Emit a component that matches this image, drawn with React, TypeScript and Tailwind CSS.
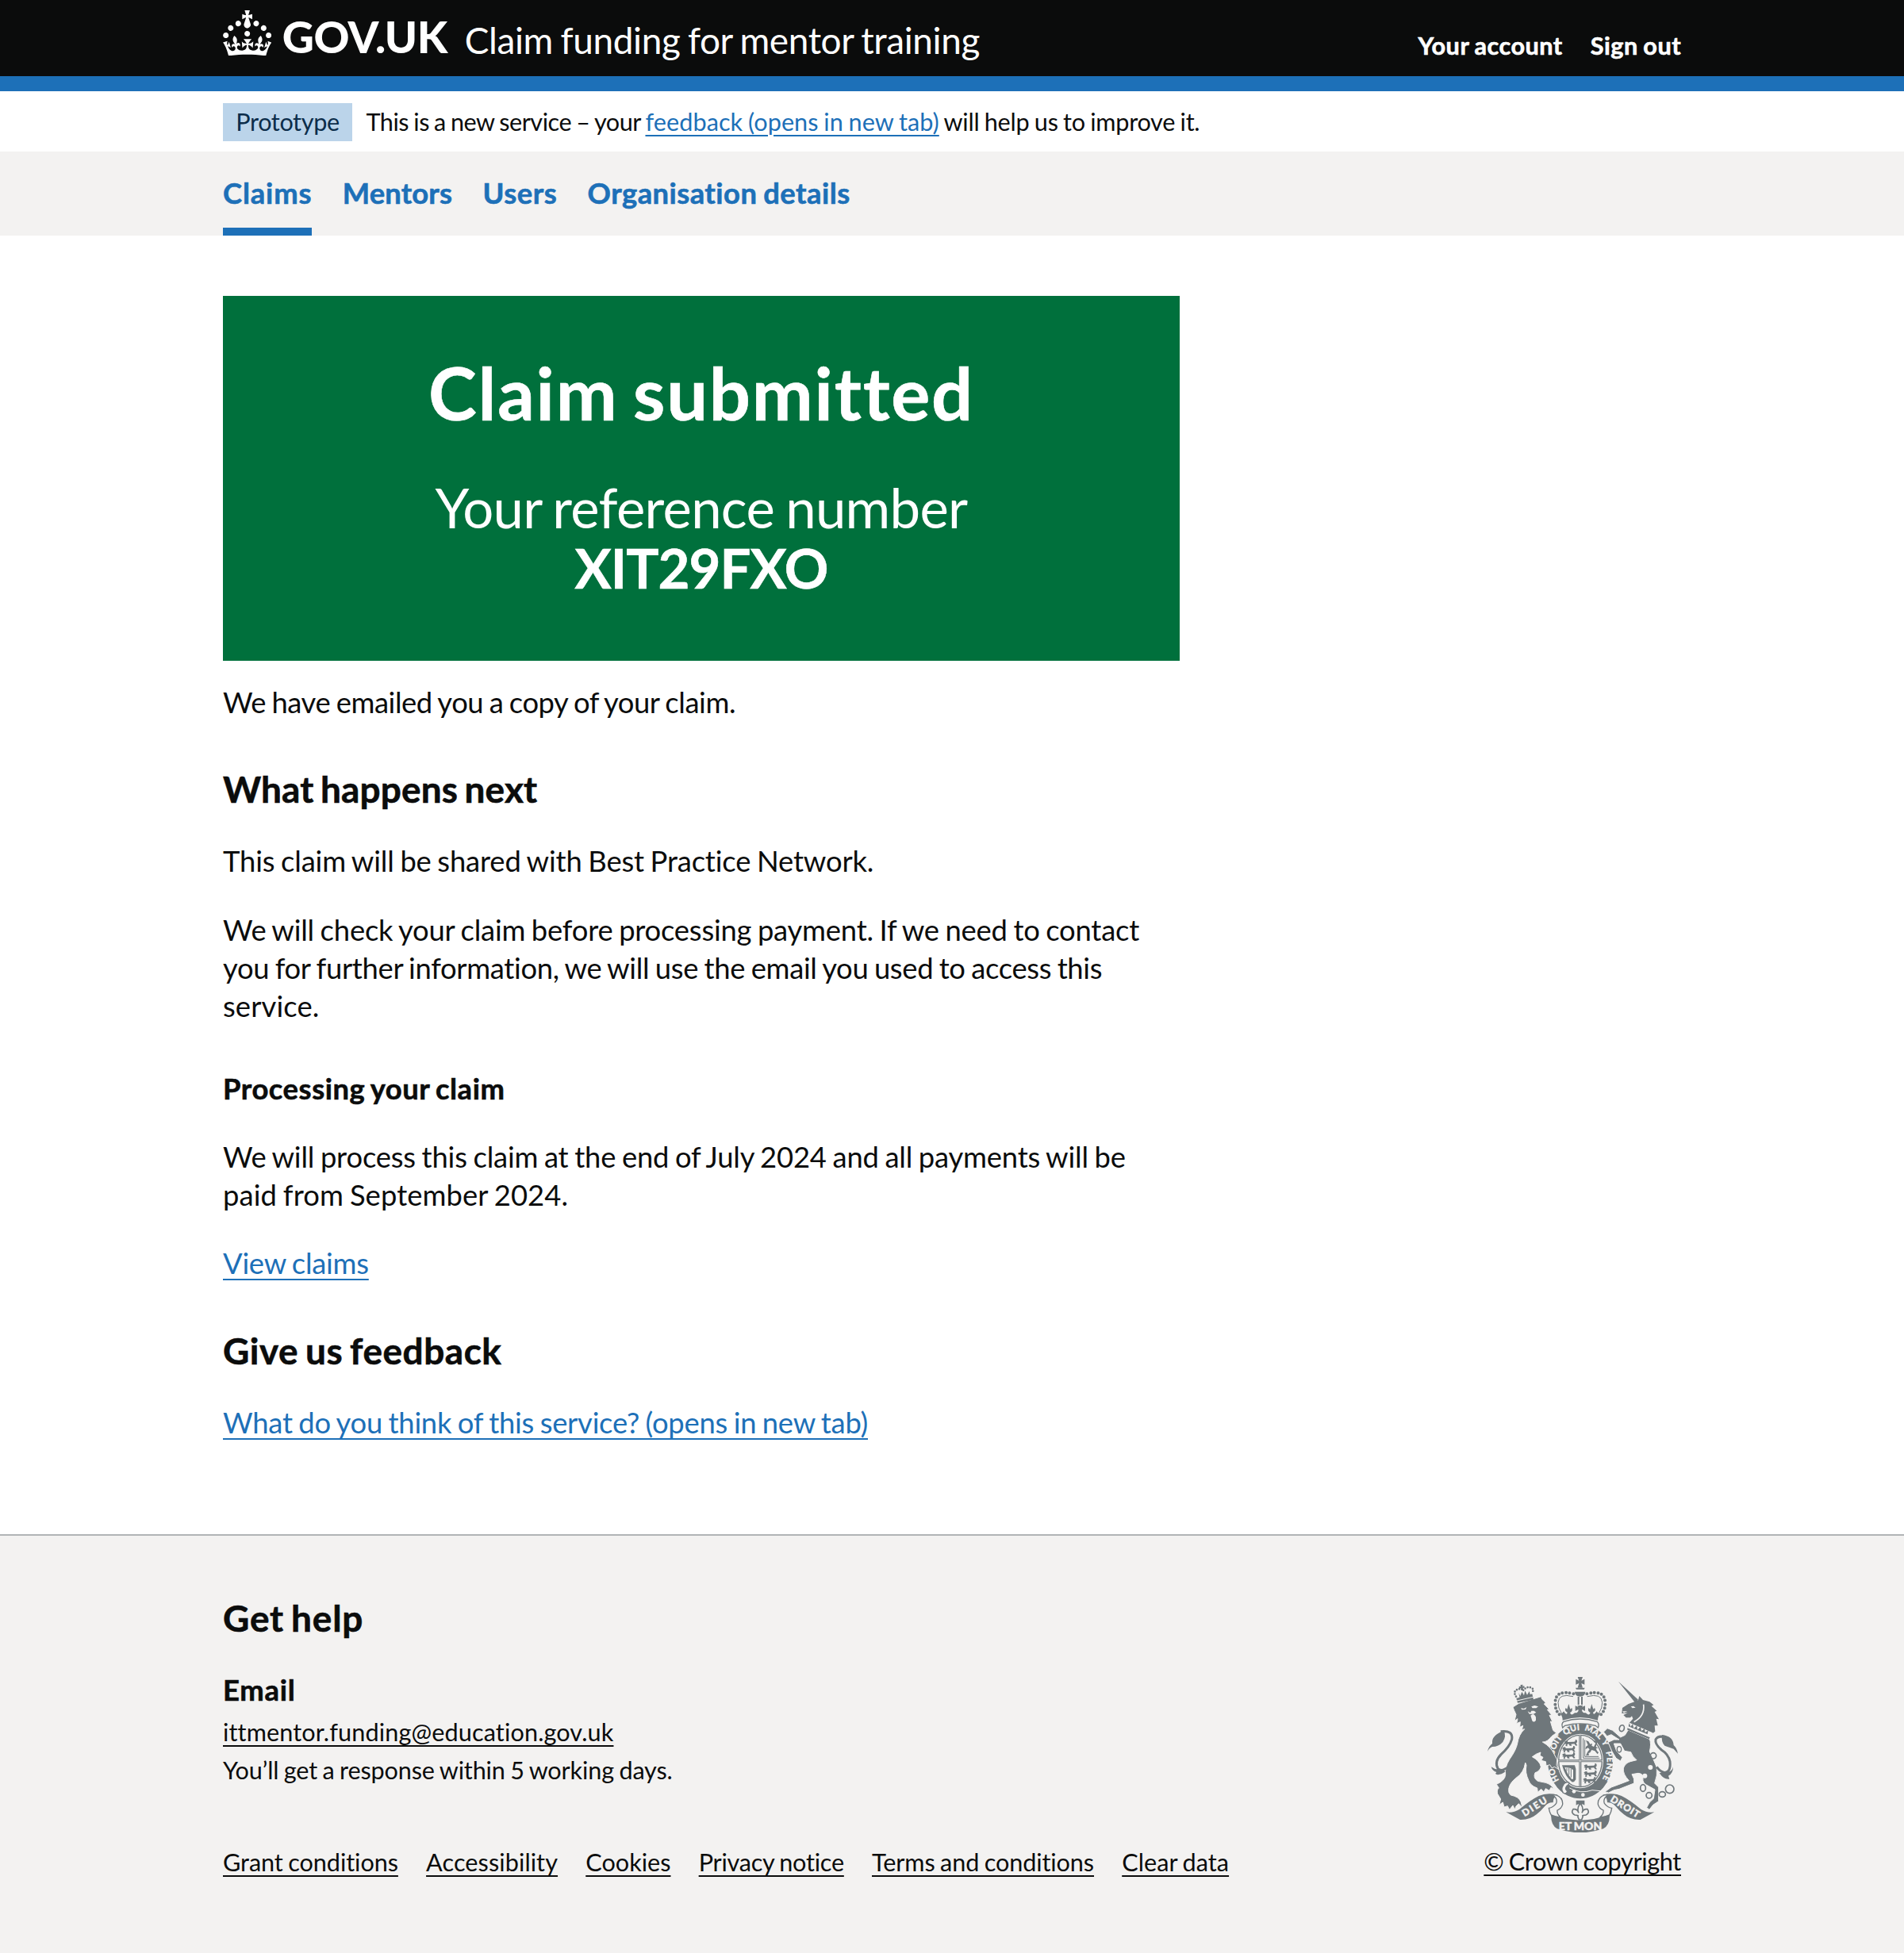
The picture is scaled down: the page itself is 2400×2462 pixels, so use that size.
import React from "react";

const GREY = "#6f777b";
const PAPER = "#f3f2f1";

function Crown() {
  return (
    <svg viewBox="0 0 32 30" className="h-[57.4px] w-[61.3px] shrink-0" fill="#ffffff" aria-hidden="true">
      <path d="M22.6 10.4c-1 .4-2-.1-2.4-1-.4-.9.1-2 1-2.4.9-.4 2 .1 2.4 1s-.1 2-1 2.4m-5.9 6.7c-.9.4-2-.1-2.4-1-.4-.9.1-2 1-2.4.9-.4 2 .1 2.4 1s-.1 2-1 2.4m10.8-3.7c-1 .4-2-.1-2.4-1-.4-.9.1-2 1-2.4.9-.4 2 .1 2.4 1s0 2-1 2.4m3.3 4.8c-1 .4-2-.1-2.4-1-.4-.9.1-2 1-2.4.9-.4 2 .1 2.4 1s-.1 2-1 2.4M17 4.7l2.3 1.2V2.5l-2.3.7-.2-.2.9-3h-3.4l.9 3-.2.2c-.1.1-2.3-.7-2.3-.7v3.4L15 4.7c.1.1.1.2.2.2l-1.3 4c-.1.2-.1.4-.1.6 0 1.1.8 2 1.9 2.2h.7c1-.2 1.9-1.1 1.9-2.1 0-.2 0-.4-.1-.6l-1.3-4c-.1-.2 0-.2.1-.3m-7.6 5.7c.9.4 2-.1 2.4-1 .4-.9-.1-2-1-2.4-.9-.4-2 .1-2.4 1s0 2 1 2.4m-5 3c.9.4 2-.1 2.4-1 .4-.9-.1-2-1-2.4-.9-.4-2 .1-2.4 1s.1 2 1 2.4m-3.2 4.8c.9.4 2-.1 2.4-1 .4-.9-.1-2-1-2.4-.9-.4-2 .1-2.4 1s0 2 1 2.4m14.8 11c4.4 0 8.6.3 12.3.8 1.1-4.5 2.4-7 3.7-8.8l-2.5-.9c.2 1.3.3 1.9 0 2.7-.4-.4-.8-1.1-1.1-2.3l-1.2 4c.7-.5 1.3-.8 2-.9-1.1 2.5-2.6 3.1-3.5 3-1.1-.2-1.7-1.2-1.5-2.1.3-1.2 1.5-1.5 2.1-.1 1.1-2.3-.8-3-2-2.3 1.9-1.9 2.1-3.5.6-5.6-2.1 1.6-2.1 3.2-1.2 5.5-1.2-1.4-3.2-.6-2.5 1.6.9-1.4 2.1-.5 1.9.8-.2 1.1-1.7 2.1-3.5 1.9-2.7-.2-2.9-2.1-2.9-3.6.7-.1 1.9.5 2.9 1.9l.4-4.3c-1.1 1.1-2.1 1.4-3.2 1.4.4-1.2 2.1-3 2.1-3h-5.4s1.7 1.9 2.1 3c-1.1 0-2.1-.2-3.2-1.4l.4 4.3c1-1.4 2.2-2 2.9-1.9-.1 1.5-.2 3.4-2.9 3.6-1.9.2-3.4-.8-3.5-1.9-.2-1.3 1-2.2 1.9-.8.7-2.3-1.2-3-2.5-1.6.9-2.2.9-3.9-1.2-5.5-1.5 2-1.3 3.7.6 5.6-1.2-.7-3.1 0-2 2.3.6-1.4 1.8-1.1 2.1.1.2.9-.3 1.9-1.5 2.1-.9.2-2.4-.5-3.5-3 .6 0 1.2.3 2 .9l-1.2-4c-.3 1.1-.7 1.9-1.1 2.3-.3-.8-.2-1.4 0-2.7l-2.9.9C1.3 23 2.6 25.5 3.7 30c3.7-.5 7.9-.8 12.3-.8" />
    </svg>
  );
}

function Passant({ x, y }: { x: number; y: number }) {
  return (
    <path
      transform={`translate(${x} ${y})`}
      d="M0 6 L5 2 L12 1 L14 6 L38 5 Q44 4 42 -3 L47 -2 Q52 6 45 11 L50 19 L44 20 L38 13 L26 14 L29 20 L21 20 L17 13 L11 16 L12 22 L5 21 L7 14 L0 13 L5 10 Z"
    />
  );
}

function RoyalArms() {
  return (
    <svg viewBox="42 38 720 590" className="h-[196.7px] w-[240px]" fill={GREY} aria-hidden="true">
      <defs>
        <path id="motto" d="M393 475 A101 118 0 0 1 393 239 A101 118 0 0 1 393 475" />
      </defs>

      {/* imperial crown */}
      <path d="M383 38h19l-5 14 12-6v21l-12-5 5 17h-19l5-17-12 5V46l12 6z" />
      <path d="M375 79h35l-3 6h-29zM372 94h40q0 17-20 18-20-1-20-18z" />
      <path d="M367 102Q300 84 298 135Q297 165 315 181M418 102Q485 84 487 135Q488 165 470 181" fill="none" stroke={GREY} strokeWidth="12" strokeLinecap="round" strokeDasharray="0 14" />
      <path d="M366 112Q311 98 309 135Q308 155 322 175M419 112Q474 98 476 135Q477 155 463 175" fill="none" stroke={GREY} strokeWidth="3" />
      <path d="M383 113h6v30h-6zM396 113h6v30h-6z" />
      <path d="M313 170 Q322 182 330 168 Q342 186 344 172 Q331 166 338 155 L343 160 L349 140 L355 160 L361 155 Q366 167 354 173 Q358 187 372 174 L379 174 Q388 168 385 161 L374 167 V147 L386 152 L382 146 H403 L399 152 L411 147 V167 L400 161 Q397 168 406 174 L413 174 Q427 187 431 173 Q419 167 424 155 L430 160 L436 140 L442 160 L447 155 Q454 166 441 172 Q443 186 455 168 Q463 182 472 170 Q458 188 459 202 Q392 180 326 202 Q327 188 313 170Z" />
      <path d="M330 207Q392 187 456 207Q466 215 460 230L450 222Q392 208 335 222L326 230Q320 214 330 207Z" fill={PAPER} stroke={GREY} strokeWidth="4" />

      {/* garter and shield */}
      <ellipse cx="393" cy="357" rx="123" ry="141" />
      <ellipse cx="393" cy="356" rx="87" ry="103" fill={PAPER} />
      <ellipse cx="393" cy="356" rx="82" ry="98" fill="none" stroke={GREY} strokeWidth="4" />
      <path d="M388 257h9v196h-9zM310 351h167v9H310z" />
      <path d="M391.500 257h2v196h-2zM310 354.500h167v2H310z" fill={PAPER} />
      <Passant x={332} y={278} />
      <Passant x={324} y={302} />
      <Passant x={324} y={326} />
      <Passant x={406} y={368} />
      <Passant x={406} y={394} />
      <Passant x={403} y={419} />
      <path d="M404 270V345H466M410 276V339H462" fill="none" stroke={GREY} strokeWidth="3" />
      <path d="M414 278l10 4 6 10 8-2-2 8 8 4 8-16-8-2 2-6 12 4-6 20 8 6-8 0 4 10 6 6 -4 6-10-12-12-4-6 10-6 2 2 8-12 2 6-14 8-10-6-6-10 6 2-10 8-6z" />
      <path d="M324 372h48l4 14v40q-8 14-16 8-24-18-36-62zM334 380q10 26 26 44l6 0V390q-10-10-32-10z" fillRule="evenodd" />
      <path d="M342 382V394M350 382V408M358 386V418" stroke={GREY} strokeWidth="3" />

      <g fill={PAPER} stroke={PAPER} strokeWidth="0.8" fontFamily="Lato, sans-serif" fontWeight="900" fontSize="32">
        <text><textPath href="#motto" startOffset="96">HO</textPath></text>
        <text><textPath href="#motto" startOffset="196">SOIT</textPath></text>
        <text><textPath href="#motto" startOffset="282">QUI</textPath></text>
        <text><textPath href="#motto" startOffset="359">MAL</textPath></text>
        <text><textPath href="#motto" startOffset="438">Y</textPath></text>
        <text><textPath href="#motto" startOffset="480" textLength="106">PENSE</textPath></text>
      </g>
      <path d="M328 448Q318 462 328 476Q340 484 344 470Q332 462 342 450Q356 440 348 436Q332 436 328 448Z" fill={PAPER} stroke={GREY} strokeWidth="4" />
      <circle cx="369" cy="471" r="7" fill={PAPER} />
      <circle cx="403" cy="484" r="7" fill={PAPER} />
      <path d="M352 458Q395 482 438 466L478 470" fill="none" stroke={PAPER} strokeWidth="3" />

      {/* lion */}
      <path stroke={PAPER} strokeWidth="3" d="M138 152 L160 138 L245 112 L248 122 L262 135 L256 140 L275 160 L268 162 L285 182 L276 183 L288 208 L280 206 L290 240 L302 250 L285 262 Q268 285 250 284 Q282 302 294 330 L305 350 L303 372 L312 388 L296 378 L285 382 L278 370 L264 374 L262 358 L245 354 L252 342 L240 335 L243 323 Q225 328 211 340 Q240 355 244 378 Q240 395 222 400 Q213 420 232 432 L262 438 Q285 445 292 462 L282 456 L276 468 L262 460 L255 473 L245 462 L232 474 L230 458 Q205 450 198 430 Q183 400 189 372 L185 362 Q180 400 150 420 Q125 440 122 462 Q120 478 130 485 Q160 490 168 510 L174 532 L160 517 L150 527 L145 539 L138 524 L125 540 L118 526 L105 530 L100 512 L86 522 L92 500 L80 480 Q76 465 85 458 L76 444 Q108 430 110 408 Q106 380 125 350 Q150 315 155 290 Q160 255 182 235 L172 238 L176 222 L164 228 L166 208 L152 214 L156 196 L144 204 L150 180 L143 165 Z" />
      <path fill={PAPER} d="M168 156l12 2 10-6-4 9-14 1zM208 150l12-4 14 4-8 6-14 0zM194 168l10 6 4-8 10 0 8 6-10 6-16 0zM205 184q12-12 20 6l0 12q-8 10-14 2z" />
      <path d="M151 119L211 102L216 124L156 136Z" />
      <path d="M150 112Q134 88 165 83Q180 84 176 90Q192 70 210 80Q219 86 210 98" fill="none" stroke={GREY} strokeWidth="8" strokeLinecap="round" strokeDasharray="0 10" />
      <path d="M166 68l10-1-2 6 7-1 1 8-7-1 3 8-10 1 1-7-7 1-1-8 7 0zM160 98l6 12 6-16 8 14 4-18 8 16 8-14 4 14-40 12z" />
      <path d="M153 128L214 114" stroke={PAPER} strokeWidth="3" />
      <path d="M92 244Q140 238 134 274Q126 302 94 330Q66 358 82 386Q96 398 124 376" fill="none" stroke={GREY} strokeWidth="9" />
      <path d="M42 320Q46 300 60 290Q56 258 104 241Q114 262 100 284Q84 302 60 302Q48 306 42 320ZM56 378Q74 392 96 386L110 396Q84 414 72 404L76 398Q60 394 56 378Z" />

      {/* unicorn */}
      <path stroke={PAPER} strokeWidth="3" d="M574 238 L655 272 Q662 292 655 320 Q668 345 682 380 Q686 410 674 440 L689 455 L689 508 L668 522 L654 540 L644 532 L655 512 L670 498 L675 464 L650 450 Q626 440 630 420 Q632 404 612 402 L588 406 Q600 425 596 440 L540 462 L520 466 L500 476 L486 472 L510 455 L535 446 L577 430 Q553 405 556 383 Q562 364 582 358 L606 352 Q590 340 584 322 L560 318 L545 290 L520 290 L530 318 L552 342 L545 356 L528 345 L512 318 L498 285 L520 275 L540 275 L510 256 L494 262 L481 246 L495 232 L515 240 L545 266 L562 258 Z" />
      <path d="M537 55L612 124L599 134ZM552 155L575 140L598 132L612 126L616 110L630 125L655 132L670 144L662 148L682 166L674 170L690 198L680 196L686 222L674 222L676 244L668 250L576 214L592 196L588 186L582 192L566 192L556 182L572 174L550 176Z" />
      <path d="M632 142Q638 186 596 208" fill="none" stroke={PAPER} strokeWidth="5" />
      <path d="M584 150l10-2 8 6-12 2zM553 168l18 0-14 6z" fill={PAPER} />
      <path d="M572 208L666 249L655 275L570 238Z" fill={PAPER} />
      <path d="M571 231L656 267L653 273L571 238ZM578 212l5 14 8-10 4 16 12-10 2 16 12-12 3 16 12-8 2 14 12-8-3 15-72-30z" />
      <circle cx="658" cy="380" r="9" fill={PAPER} />
      <circle cx="637" cy="412" r="9" fill={PAPER} />
      <g fill="none" stroke={GREY} strokeWidth="5">
        <ellipse cx="550" cy="232" rx="9" ry="12" transform="rotate(15 550 232)" />
        <ellipse cx="630" cy="458" rx="10" ry="13" />
        <circle cx="653" cy="486" r="11" />
        <ellipse cx="703" cy="482" rx="12" ry="10" />
        <circle cx="731" cy="462" r="16" />
        <circle cx="669" cy="336" r="11" />
      </g>
      <ellipse cx="540" cy="312" rx="8" ry="11" fill={PAPER} stroke={GREY} strokeWidth="4" />
      <path d="M682 378Q694 396 712 400Q736 398 732 358Q726 330 700 314Q674 292 678 274Q688 258 716 266" fill="none" stroke={GREY} strokeWidth="9" />
      <path d="M762 328Q758 306 746 296Q744 262 702 257Q698 284 712 298Q734 306 746 310ZM744 378Q738 402 716 396L692 402Q710 428 730 424L726 412Q744 404 744 378Z" />

      {/* ribbon */}
      <path d="M112 549Q140 553 162 539Q205 503 236 488Q268 474 308 484Q290 492 290 513Q272 511 258 528Q215 581 165 578Z" />
      <path d="M673 549Q645 553 623 539Q580 503 549 488Q517 474 477 484Q495 492 495 513Q513 511 527 528Q570 581 620 578Z" />
      <path d="M300 484Q328 494 326 520Q322 536 306 542Q304 556 318 568L286 566Q276 550 274 534Q290 532 302 516Q308 498 290 486ZM485 484Q458 494 460 520Q464 536 480 542Q482 556 468 568L500 566Q510 550 512 534Q496 532 484 516Q478 498 496 486Z" fill={PAPER} stroke={GREY} strokeWidth="4" />
      <path d="M283 558Q393 602 503 558Q507 596 480 612Q393 642 305 612Q280 596 283 558Z" />
      <path d="M377 505h32v18l-8-4-8 8-8-8-8 4z" />
      <path d="M393 516Q408 536 399 552Q404 536 420 538Q430 552 414 560L402 562L402 568L398 578H388L384 568L384 562L372 560Q356 552 366 538Q382 536 387 552Q378 536 393 516Z" fill={PAPER} stroke={GREY} strokeWidth="5" />
      <g fill={PAPER} stroke={PAPER} strokeWidth="1.2" fontFamily="Lato, sans-serif" fontWeight="900" fontSize="36" textAnchor="middle">
        <text x="393" y="616" textLength="164" fontSize="42">ET MON</text>
        <text transform="translate(226 539) rotate(-32)" textLength="104">DIEU</text>
        <text transform="translate(556 539) rotate(32)" textLength="122">DROIT</text>
      </g>
    </svg>
  );
}

const navLinks = [
  { label: "Claims", tracking: "tracking-[0.023em]", current: true },
  { label: "Mentors", tracking: "tracking-[0.005em]" },
  { label: "Users", tracking: "tracking-[0.014em]" },
  { label: "Organisation details", tracking: "tracking-[0.0125em]" },
];

const footerLinks = [
  { label: "Grant conditions", tracking: "tracking-[-0.0024em]" },
  { label: "Accessibility", tracking: "tracking-[0.0027em]" },
  { label: "Cookies", tracking: "tracking-[0em]" },
  { label: "Privacy notice", tracking: "tracking-[-0.008em]" },
  { label: "Terms and conditions", tracking: "tracking-[-0.0035em]" },
  { label: "Clear data", tracking: "tracking-[0.001em]" },
];

const body = "text-[36.4px] leading-[47.86px]";
const small = "text-[30.63px] leading-[38.3px]";
const bold = "font-bold [-webkit-text-stroke:0.6px_currentColor] [word-spacing:-0.06em]!";
const link = "underline decoration-2 underline-offset-[6px]";
const smallLink = "underline decoration-2 underline-offset-[5px]";

export default function App() {
  return (
    <div className="flex h-[2462px] w-[2400px] flex-col overflow-hidden whitespace-nowrap bg-white font-['Lato',sans-serif] text-[#0b0c0c] [&_*]:[word-spacing:-0.04em]">
      <header className="h-[115px] border-b-[19px] border-[#1d70b8] bg-[#0b0c0c] text-white">
        <div className="mx-auto flex w-[1838px] items-start justify-between">
          <div className="flex items-start">
            <div className="pt-[13px]"><Crown /></div>
            <span className="ml-[13.5px] mt-[13px] w-[210px] text-[55.5px] font-black leading-[66px] tracking-[-0.01em]">GOV.UK</span>
            <span className="ml-[20px] mt-[22px] text-[45.95px] leading-[57.4px] tracking-[-0.0085em]">Claim funding for mentor training</span>
          </div>
          <nav className={`mt-[38.5px] flex gap-[35px] ${small} ${bold}`}>
            <a className="tracking-[0.0165em]">Your account</a>
            <a className="tracking-[0.0155em]">Sign out</a>
          </nav>
        </div>
      </header>

      <div className={`mx-auto flex h-[76px] w-[1838px] items-start pt-[15px] ${small}`}>
        <strong className="flex h-[48px] w-[163px] items-center justify-center bg-[#bbd4ea] font-normal tracking-[-0.012em] text-[#0c2d4a]">Prototype</strong>
        <p className="ml-[17.5px] mt-[4.5px]">
          <span className="tracking-[-0.0155em]">This is a new service – your </span>
          <a className={`tracking-[0.002em] text-[#1d70b8] ${smallLink}`}>feedback (opens in new tab)</a>
          <span className="tracking-[-0.008em]"> will help us to improve it.</span>
        </p>
      </div>

      <nav className="h-[106px] bg-[#f3f2f1]">
        <ul className={`mx-auto flex h-full w-[1838px] gap-[38.3px] text-[#1d70b8] ${body} ${bold}`}>
          {navLinks.map((item) => (
            <li key={item.label} className={`h-full border-b-[10px] pt-[28.5px] ${item.tracking} ${item.current ? "border-[#1d70b8]" : "border-transparent"}`}>
              {item.label}
            </li>
          ))}
        </ul>
      </nav>

      <main className={`mx-auto flex h-[1637px] w-[1838px] flex-col pt-[76px] ${body}`}>
        <section className="flex h-[459.500px] w-[1206px] flex-col items-center bg-[#00703c] text-white">
          <h1 className={`mt-[74px] text-[91.9px] leading-[95.7px] tracking-[0.0195em] ${bold}`}>Claim submitted</h1>
          <p className="mt-[59px] text-[68.9px] leading-[76.6px] tracking-[-0.0105em]">Your reference number</p>
          <strong className="text-[68.9px] leading-[76.6px] tracking-[-0.014em] [-webkit-text-stroke:0.6px_currentColor]">XIT29FXO</strong>
        </section>

        <p className="mt-[29px] tracking-[-0.0117em]">We have emailed you a copy of your claim.</p>
        <h2 className={`mt-[56.3px] text-[45.95px] leading-[57.4px] tracking-[0.003em] ${bold}`}>What happens next</h2>
        <p className="mt-[39.4px] tracking-[-0.0045em]">This claim will be shared with Best Practice Network.</p>
        <p className="mt-[38.6px]">
          <span className="block tracking-[-0.0058em]">We will check your claim before processing payment. If we need to contact</span>
          <span className="block tracking-[-0.0091em]">you for further information, we will use the email you used to access this</span>
          <span className="block tracking-[0.003em]">service.</span>
        </p>
        <h3 className={`mt-[56.9px] tracking-[0.0152em] ${bold}`}>Processing your claim</h3>
        <p className="mt-[38.1px]">
          <span className="block tracking-[-0.0049em]">We will process this claim at the end of July 2024 and all payments will be</span>
          <span className="block tracking-[0.0021em]">paid from September 2024.</span>
        </p>
        <p className="mt-[38.3px]"><a className={`tracking-[-0.007em] text-[#1d70b8] ${link}`}>View claims</a></p>
        <h2 className={`mt-[56.6px] text-[45.95px] leading-[57.4px] tracking-[0.0115em] ${bold}`}>Give us feedback</h2>
        <p className="mt-[39.1px]"><a className={`tracking-[-0.0069em] text-[#1d70b8] ${link}`}>What do you think of this service? (opens in new tab)</a></p>
      </main>

      <footer className="grow border-t-2 border-[#b1b4b6] bg-[#f3f2f1]">
        <div className="mx-auto flex w-[1838px] justify-between">
          <div className="pt-[74.500px]">
            <h2 className={`text-[45.95px] leading-[57.4px] tracking-[0.0175em] ${bold}`}>Get help</h2>
            <h3 className={`mt-[39.500px] tracking-[0.02em] ${body} ${bold}`}>Email</h3>
            <ul className="text-[30.63px] leading-[47.86px]">
              <li className="mt-[5px]"><a className={`tracking-[0.004em] ${smallLink}`}>ittmentor.funding@education.gov.uk</a></li>
              <li className="tracking-[-0.0048em]">You’ll get a response within 5 working days.</li>
            </ul>
            <ul className={`mt-[73px] flex gap-[35.2px] ${small}`}>
              {footerLinks.map((item) => (
                <li key={item.label} className={`${item.tracking} ${smallLink}`}>{item.label}</li>
              ))}
            </ul>
          </div>
          <div className="flex flex-col items-center pt-[177.500px]">
            <RoyalArms />
            <a className={`mt-[18px] tracking-[-0.011em] ${small} ${smallLink}`}>© Crown copyright</a>
          </div>
        </div>
      </footer>
    </div>
  );
}
